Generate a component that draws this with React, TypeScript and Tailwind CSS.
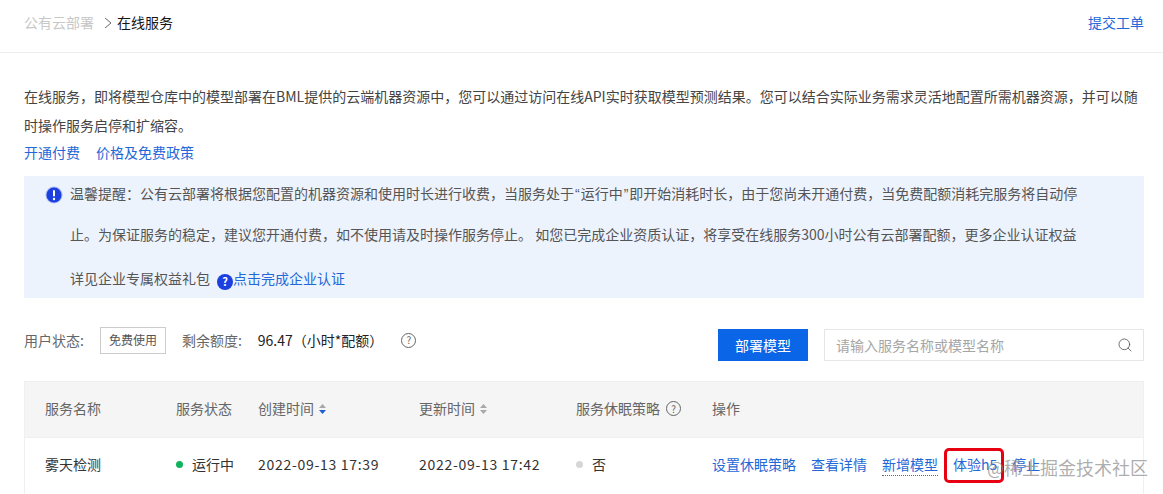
import React from "react";
import { Search } from "lucide-react";

const font = { fontFamily: '"Noto Sans CJK SC", "Liberation Sans", sans-serif' };

function Help({ className = "" }: { className?: string }) {
  return (
    <span className={`inline-flex h-[15px] w-[15px] items-center justify-center rounded-full border border-[#666] text-[10px] leading-none text-[#666] ${className}`}>?</span>
  );
}

function Sort({ active = false }: { active?: boolean }) {
  return (
    <svg width="9" height="12" viewBox="0 0 9 12" className="ml-[4px]">
      <path d="M4.5 1 L8 5 H1 Z" fill="#a8a8a8" />
      <path d="M4.5 11 L8 7 H1 Z" fill={active ? "#1f5fd0" : "#a8a8a8"} />
    </svg>
  );
}

function Quote({ children }: { children: React.ReactNode }) {
  return <span className="mx-[1px] font-['Liberation_Sans']">{children}</span>;
}

export default function App() {
  return (
    <div className="relative h-[494px] w-[1163px] overflow-hidden bg-white text-[14px] text-[#444]" style={font}>
      <header className="flex h-[53px] items-center justify-between border-b border-[#eeeeee] pb-[7px] pl-[24px] pr-[19px]">
        <div className="flex items-center">
          <span className="text-[#c8c8c8]">公有云部署</span>
          <svg width="10" height="12" viewBox="0 0 10 12" className="ml-[9px] mr-[4px]"><path d="M2 1 L8 6 L2 11" fill="none" stroke="#666" strokeWidth="1" /></svg>
          <span className="text-[#151515]">在线服务</span>
        </div>
        <span className="text-[#2468d8]">提交工单</span>
      </header>

      <main className="pl-[24px] pr-[19px]">
        <p className="mt-[29px] leading-[29px]">
          在线服务，即将模型仓库中的模型部署在BML提供的云端机器资源中，您可以通过访问在线API实时获取模型预测结果。您可以结合实际业务需求灵活地配置所需机器资源，并可以随时操作服务启停和扩缩容。
        </p>
        <div className="flex gap-[16px] leading-[24px] text-[#2468d8]">
          <span>开通付费</span>
          <span>价格及免费政策</span>
        </div>

        <section className="mt-[12px] flex h-[122px] bg-[#edf3fd] pl-[21px] pr-[60px] text-[#555]">
          <svg width="18" height="18" viewBox="0 0 18 18" className="mr-[7px] mt-[10px] shrink-0">
            <circle cx="9" cy="9" r="8.5" fill="#a9b8f5" />
            <circle cx="9" cy="9" r="7.5" fill="#1c3fe0" />
            <rect x="8" y="4" width="2" height="6.5" rx="1" fill="#fff" />
            <circle cx="9" cy="13" r="1.2" fill="#fff" />
          </svg>
          <div className="-mt-[3px] leading-[40px]">
            <div>
              温馨提醒：公有云部署将根据您配置的机器资源和使用时长进行收费，当服务处于<Quote>“</Quote>运行中<Quote>”</Quote>即开始消耗时长，由于您尚未开通付费，当免费配额消耗完服务将自动停止。为保证服务的稳定，建议您开通付费，如不使用请及时操作服务停止。 如您已完成企业资质认证，将享受在线服务300小时公有云部署配额，更多企业认证权益
            </div>
            <div className="mt-[4px]">
              详见企业专属权益礼包
              <span className="ml-[7px] inline-flex h-[16px] w-[16px] items-center justify-center rounded-full bg-[#1c3fe0] align-[-2px] text-[11px] font-bold leading-none text-white">?</span>
              <span className="text-[#2468d8]">点击完成企业认证</span>
            </div>
          </div>
        </section>

        <section className="mt-[31px] flex h-[32px] items-center">
          <div className="mb-[10px] flex items-center">
            <span className="text-[#666]">用户状态:</span>
            <span className="ml-[16px] flex h-[27px] w-[66px] items-center justify-center border border-[#cccccc] text-[12px] text-[#555]">免费使用</span>
            <span className="ml-[16px] text-[#666]">剩余额度:</span>
            <span className="ml-[16px] text-[#222]">96.47（小时*配额）</span>
            <Help className="ml-[18px]" />
          </div>
          <div className="ml-auto flex h-[32px] items-center">
            <button className="flex h-[32px] w-[90px] items-center justify-center bg-[#0a66e6] text-white">部署模型</button>
            <div className="ml-[16px] flex h-[32px] w-[320px] items-center justify-between border border-[#e6e6e6] pl-[11px] pr-[10px] text-[#a6a6a6]">
              <span>请输入服务名称或模型名称</span>
              <Search size={16} strokeWidth={1.25} color="#555" />
            </div>
          </div>
        </section>

        <section className="mt-[20px]">
          <div className="flex h-[57px] items-center border border-[#f0f0f0] bg-[#f5f5f5] pb-[2px] text-[#666]">
            <div className="w-[151px] pl-[20px]">服务名称</div>
            <div className="w-[82px]">服务状态</div>
            <div className="flex w-[161px] items-center">创建时间<Sort active /></div>
            <div className="flex w-[157px] items-center">更新时间<Sort /></div>
            <div className="flex w-[136px] items-center">服务休眠策略<Help className="ml-[6px]" /></div>
            <div>操作</div>
          </div>
          <div className="flex h-[57px] items-center border-l border-r border-[#f0f0f0] pb-[4px] text-[#333]">
            <div className="w-[151px] pl-[20px]">雾天检测</div>
            <div className="flex w-[82px] items-center"><i className="mr-[9px] h-[7px] w-[7px] rounded-full bg-[#10b45c]" />运行中</div>
            <div className="w-[161px] tracking-[0.7px]">2022-09-13 17:39</div>
            <div className="w-[157px] tracking-[0.7px]">2022-09-13 17:42</div>
            <div className="flex w-[136px] items-center"><i className="mr-[9px] h-[7px] w-[7px] rounded-full bg-[#d6d6d6]" />否</div>
            <div className="flex gap-[15px] whitespace-nowrap text-[#2468d8]">
              <span>设置休眠策略</span>
              <span>查看详情</span>
              <span className="border-b border-dotted border-[#666]">新增模型</span>
              <span>体验h5</span>
              <span>停止</span>
            </div>
          </div>
        </section>
      </main>

      <div className="absolute left-[944px] top-[448px] h-[35px] w-[60px] rounded-[5px] border-[3px] border-[#e60012]" />
      <div className="absolute left-[987px] top-[454px] text-[18px] leading-[26px] text-[#8a8a8a]/70">@稀土掘金技术社区</div>
    </div>
  );
}
